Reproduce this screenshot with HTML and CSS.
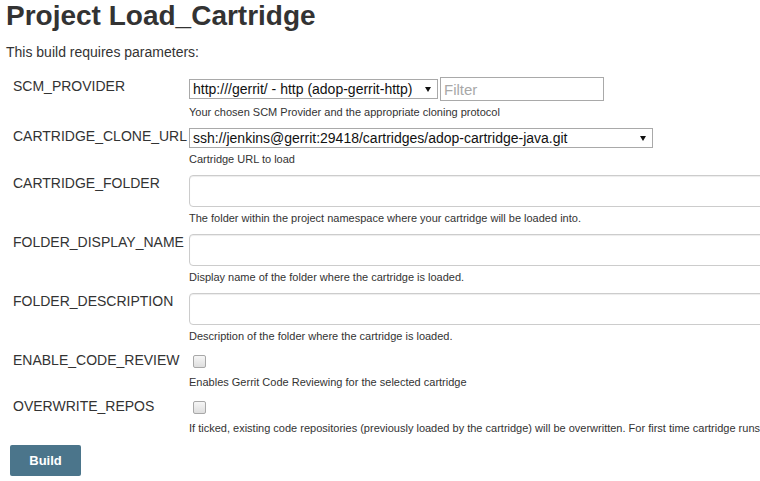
FILE: index.html
```html
<!DOCTYPE html>
<html lang="en">
<head>
<meta charset="utf-8">
<title>Project Load_Cartridge</title>
<link rel="stylesheet" href="styles.css">
</head>
<body>
<div class="page">
  <h1 class="title">Project Load_Cartridge</h1>
  <p class="intro">This build requires parameters:</p>
  <form class="params">
    <div class="param">
      <div class="label label-first">SCM_PROVIDER</div>
      <div class="field">
        <div class="control-row">
          <span class="select-wrap select-scm"><select class="select"><option>http:///gerrit/ - http (adop-gerrit-http)</option></select></span>
          <input class="filter" type="text" placeholder="Filter">
        </div>
        <div class="desc">Your chosen SCM Provider and the appropriate cloning protocol</div>
      </div>
    </div>
    <div class="param">
      <div class="label">CARTRIDGE_CLONE_URL</div>
      <div class="field">
        <span class="select-wrap select-url"><select class="select"><option>ssh://jenkins@gerrit:29418/cartridges/adop-cartridge-java.git</option></select></span>
        <div class="desc">Cartridge URL to load</div>
      </div>
    </div>
    <div class="param">
      <div class="label">CARTRIDGE_FOLDER</div>
      <div class="field">
        <input class="text-input" type="text">
        <div class="desc">The folder within the project namespace where your cartridge will be loaded into.</div>
      </div>
    </div>
    <div class="param">
      <div class="label">FOLDER_DISPLAY_NAME</div>
      <div class="field">
        <input class="text-input" type="text">
        <div class="desc">Display name of the folder where the cartridge is loaded.</div>
      </div>
    </div>
    <div class="param">
      <div class="label">FOLDER_DESCRIPTION</div>
      <div class="field">
        <input class="text-input" type="text">
        <div class="desc">Description of the folder where the cartridge is loaded.</div>
      </div>
    </div>
    <div class="param">
      <div class="label">ENABLE_CODE_REVIEW</div>
      <div class="field">
        <div class="check-row"><input class="check" type="checkbox"></div>
        <div class="desc">Enables Gerrit Code Reviewing for the selected cartridge</div>
      </div>
    </div>
    <div class="param">
      <div class="label">OVERWRITE_REPOS</div>
      <div class="field">
        <div class="check-row"><input class="check" type="checkbox"></div>
        <div class="desc">If ticked, existing code repositories (previously loaded by the cartridge) will be overwritten. For first time cartridge runs</div>
      </div>
    </div>
    <button class="build" type="button">Build</button>
  </form>
</div>
</body>
</html>
```
FILE: styles.css
```css
html, body {
  margin: 0;
  padding: 0;
  background: #fff;
  overflow: hidden;
}

body {
  font-family: "Liberation Sans", Arial, sans-serif;
  color: #333;
}

.page {
  padding: 0 6px;
  width: 1000px;
}

.title {
  margin: 0;
  font-size: 28px;
  line-height: 32px;
  font-weight: bold;
  color: #333;
}

.intro {
  margin: 12px 0 0;
  font-size: 14px;
  line-height: 16px;
}

.params {
  margin-top: 17px;
  padding-left: 7px;
}

.param {
  display: grid;
  grid-template-columns: 176px auto;
  align-items: start;
}

.label {
  font-size: 14px;
  line-height: 16px;
  padding-top: 0;
  white-space: nowrap;
}

.label-first {
  padding-top: 1px;
}

.field {
  display: flex;
  flex-direction: column;
  align-items: flex-start;
}

.control-row {
  display: flex;
  align-items: center;
  height: 24px;
}

.select-wrap {
  position: relative;
  display: block;
}

.select-wrap::after {
  content: "";
  position: absolute;
  top: 8px;
  right: 7px;
  border-left: 3px solid transparent;
  border-right: 3px solid transparent;
  border-top: 5px solid #111;
  pointer-events: none;
}

.select {
  appearance: none;
  -webkit-appearance: none;
  display: block;
  box-sizing: border-box;
  height: 20px;
  margin: 0;
  padding: 0 18px 0 3px;
  border: 1px solid #a9a9a9;
  border-radius: 0;
  background: #fff;
  color: #111;
  font-family: "Liberation Sans", Arial, sans-serif;
  font-size: 14px;
  line-height: 18px;
}

.select-scm .select {
  width: 249px;
}

.select-url .select {
  width: 464px;
}

.filter {
  box-sizing: border-box;
  width: 164px;
  height: 24px;
  margin: 0 0 0 2px;
  padding: 0 3px;
  border: 1px solid #a9a9a9;
  border-radius: 0;
  font-family: "Liberation Sans", Arial, sans-serif;
  font-size: 15px;
  color: #333;
  outline: none;
}

.filter::placeholder {
  color: #a8a8a8;
}

.text-input {
  box-sizing: border-box;
  width: 620px;
  height: 32px;
  margin: 0;
  padding: 4px 8px;
  border: 1px solid #ccc;
  border-radius: 4px;
  box-shadow: inset 0 1px 1px rgba(0, 0, 0, 0.075);
  font-family: "Liberation Sans", Arial, sans-serif;
  font-size: 14px;
  outline: none;
}

.check-row {
  height: 19px;
}

.check {
  appearance: none;
  -webkit-appearance: none;
  box-sizing: border-box;
  width: 13px;
  height: 13px;
  margin: 3px 0 0 4px;
  border: 1px solid #a8a8a8;
  border-radius: 2px;
  background: linear-gradient(#f6f6f6, #dedede);
  display: block;
}

.desc {
  margin: 4px 0 9px;
  font-size: 11px;
  line-height: 14px;
  color: #333;
  white-space: nowrap;
}

.build {
  display: block;
  box-sizing: border-box;
  width: 71px;
  height: 31px;
  margin: 1px 0 0 -3px;
  padding: 0;
  border: none;
  border-radius: 2px;
  background: #4b758b;
  color: #fff;
  font-family: "Liberation Sans", Arial, sans-serif;
  font-size: 13px;
  font-weight: bold;
}
```
